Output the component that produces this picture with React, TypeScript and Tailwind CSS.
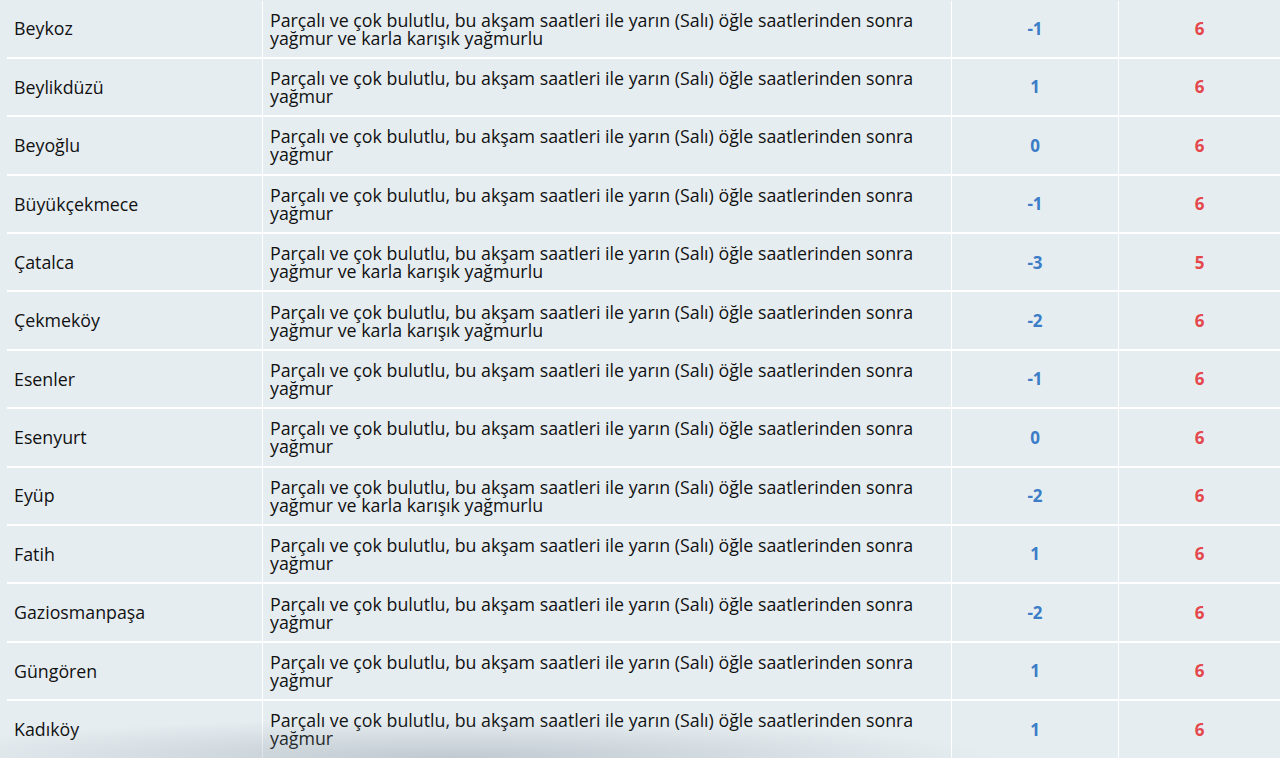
import React from "react";

const TWO = "Parçalı ve çok bulutlu, bu akşam saatleri ile yarın (Salı) öğle saatlerinden sonra yağmur";
const KAR = "Parçalı ve çok bulutlu, bu akşam saatleri ile yarın (Salı) öğle saatlerinden sonra yağmur ve karla karışık yağmurlu";

const rows: [string, string, string, string][] = [
  ["Beykoz", KAR, "-1", "6"],
  ["Beylikdüzü", TWO, "1", "6"],
  ["Beyoğlu", TWO, "0", "6"],
  ["Büyükçekmece", TWO, "-1", "6"],
  ["Çatalca", KAR, "-3", "5"],
  ["Çekmeköy", KAR, "-2", "6"],
  ["Esenler", TWO, "-1", "6"],
  ["Esenyurt", TWO, "0", "6"],
  ["Eyüp", KAR, "-2", "6"],
  ["Fatih", TWO, "1", "6"],
  ["Gaziosmanpaşa", TWO, "-2", "6"],
  ["Güngören", TWO, "1", "6"],
  ["Kadıköy", TWO, "1", "6"],
];

export default function App() {
  return (
    <div
      className="relative w-[1280px] h-[758px] overflow-hidden bg-[#e6edf1] text-[#111]"
      style={{ fontFamily: '"Open Sans", "Noto Sans", sans-serif' }}
    >
      <div className="ml-[7px] mt-[0.5px] flex flex-col">
        {rows.map(([name, desc, lo, hi], i) => (
          <div key={i} className="flex h-[58.4px] shrink-0 border-b-2 border-white">
            <div className="w-[255px] shrink-0 flex items-center pl-[7px] text-[17.8px]">{name}</div>
            <div className="w-[689px] shrink-0 flex items-center border-l border-white pl-[7px] pr-[20px] text-[17.8px] leading-[18px]">
              <span>{desc}</span>
            </div>
            <div className="w-[167px] shrink-0 flex items-center justify-center border-l border-white font-bold text-[17px] text-[#3b7dc6]">
              {lo}
            </div>
            <div className="flex-1 flex items-center justify-center border-l border-white font-bold text-[17px] text-[#e4474b]">
              {hi}
            </div>
          </div>
        ))}
      </div>
      <div className="pointer-events-none absolute left-[-100px] bottom-[-40px] w-[1100px] h-[80px] bg-[radial-gradient(ellipse_at_center,rgba(120,135,145,0.35),rgba(120,135,145,0)_70%)]" />
    </div>
  );
}
